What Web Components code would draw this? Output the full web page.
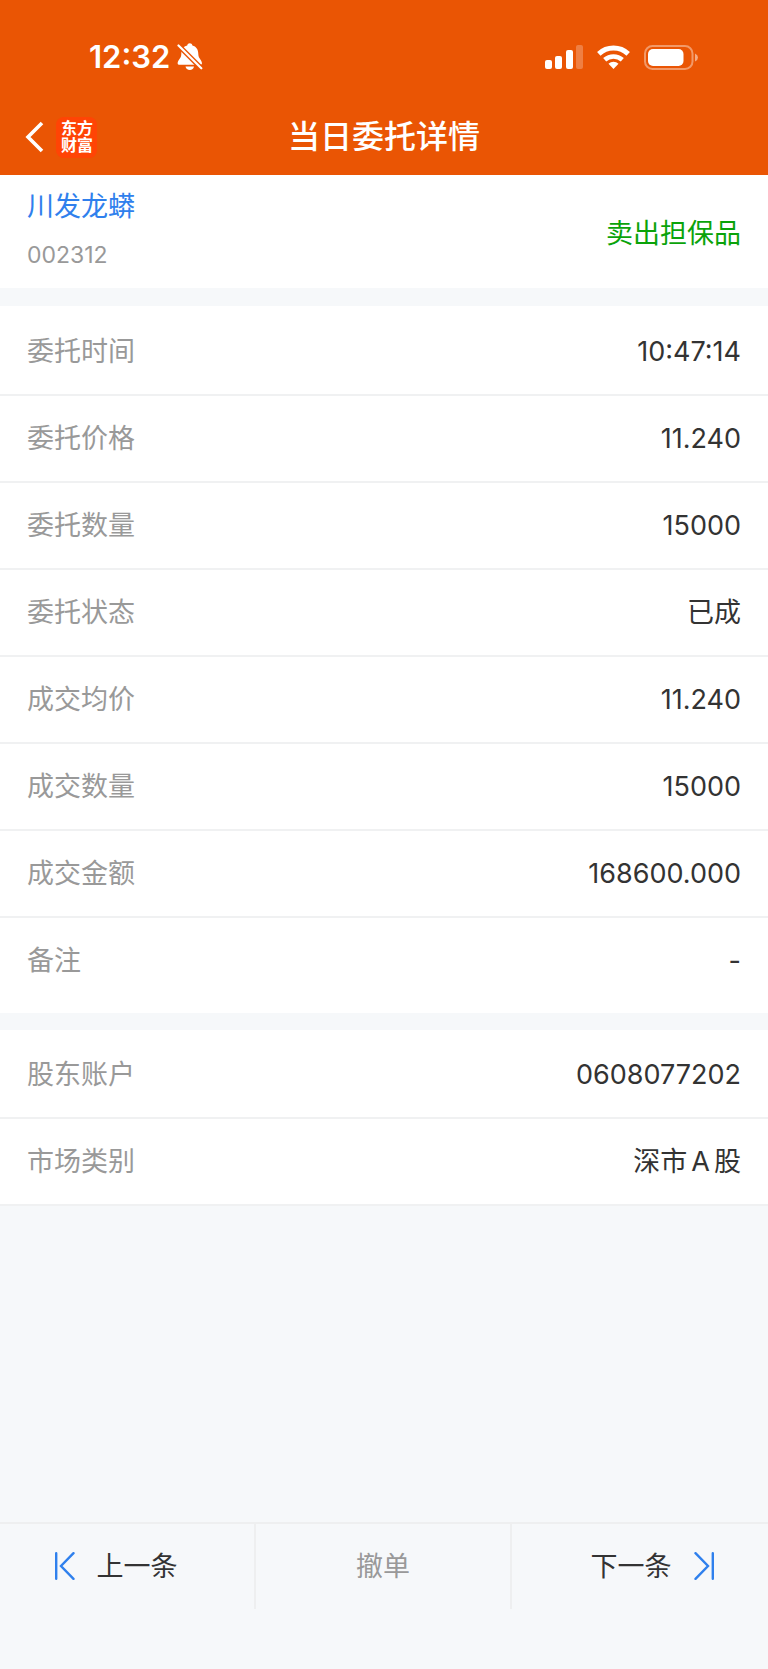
<!doctype html>

<html lang="zh-CN">
<head>
  <meta charset="utf-8">
  <meta name="viewport" content="width=device-width, initial-scale=1">
  <title>当日委托详情</title>
  <style>
    body {
      margin: 0;
      background: #f6f8fa;
      color: #333;
      font-family: Inter, "Noto Sans CJK SC", sans-serif;
      font-size: 27px;
      line-height: 40px;
    }

    .latin {
      padding: 0 4px;
    }
  </style>
</head>

<body>
<template id="status-bar-template">
<style>
  :host {
    display: flex;
    justify-content: space-between;
    align-items: center;
    height: 84px;
    padding: 15px 70px 0 89px;
    color: white;
  }

  .left, .right {
    display: flex;
    align-items: center;
  }

  .left {
    gap: 7px;
  }

  .right {
    gap: 14px;
  }

  .time {
    font-size: 31px;
    font-weight: 600;
  }

  svg {
    display: block;
  }
</style>
<div class="left">
  <span class="time"><slot></slot></span>
  <svg width="26" height="28" viewBox="0 0 26 28" fill="white">
    <path d="M10.200 2.500C10.500 1 11.500 .3 12.800 .3S15.100 1 15.400 2.500C19.200 3.500 21.300 6.500 21.300 11C21.300 15.500 24.800 17 25 20.300Q25 21.700 23.800 21.700H1.800Q.6 21.700 .6 20.300C.8 17 4.300 15.500 4.300 11C4.300 6.500 6.400 3.500 10.200 2.500Z"/>
    <path d="M8.500 23.500H17C16.700 25.500 15 27 12.800 27S8.800 25.500 8.500 23.500Z"/>
    <path d="M-1 0L26 27" fill="none" stroke="#ea5504" stroke-width="5"/>
    <path d="M1.500 2.500L24.300 25.300" fill="none" stroke="white" stroke-width="2.200" stroke-linecap="round"/>
  </svg>
</div>
<div class="right">
  <svg width="38" height="25" viewBox="0 0 38 25" fill="white">
    <rect x="0" y="15" width="7" height="9" rx="2"/>
    <rect x="10" y="11" width="7" height="13" rx="2"/>
    <rect x="21" y="5" width="7" height="19" rx="2"/>
    <rect x="31" y="0" width="7" height="24" rx="2" opacity=".25"/>
  </svg>
  <svg width="33" height="25" viewBox="0 0 33 25">
    <path d="M1.800 8.900A21.500 21.500 0 0 1 31.200 8.900" fill="none" stroke="white" stroke-width="5"/>
    <path d="M7.700 14.800A13.200 13.200 0 0 1 25.300 14.800" fill="none" stroke="white" stroke-width="4.600"/>
    <path d="M11.500 18.700A7.500 7.500 0 0 1 21.500 18.700L16.500 24Z" fill="white"/>
  </svg>
  <svg width="54" height="25" viewBox="0 0 54 25">
    <rect x="1" y="1" width="47.500" height="23" rx="7.500" fill="none" stroke="white" stroke-width="2" opacity=".4"/>
    <rect x="4" y="4" width="35.500" height="17" rx="5" fill="white"/>
    <path d="M51 8.500Q54 10 54 12.500T51 16.500Z" fill="white" opacity=".5"/>
  </svg>
</div>
</template>

<template id="nav-bar-template">
<style>
  :host {
    display: grid;
    grid-template-columns: 1fr auto 1fr;
    align-items: center;
    height: 76px;
    padding: 0 24px;
    color: white;
  }

  .back {
    display: flex;
    align-items: center;
    gap: 12px;
  }

  button {
    padding: 0;
    border: 0;
    background: none;
  }

  svg {
    display: block;
  }

  .logo {
    width: 32px;
    padding: 3px 4px 4px 5px;
    border-radius: 8px;
    background: #ff4405;
    font-size: 16px;
    font-weight: 700;
    line-height: 17px;
    text-align: center;
  }

  h1 {
    margin: 0;
    font-size: 32px;
    font-weight: 500;
    line-height: 44px;
  }
</style>
<div class="back">
  <button type="button" aria-label="返回">
    <svg width="20" height="32" viewBox="0 0 20 32" fill="none" stroke="white" stroke-width="3.600">
      <path d="M18 2L4 16L18 30"/>
    </svg>
  </button>
  <div class="logo"><slot name="logo"></slot></div>
</div>
<h1><slot></slot></h1>
</template>

<template id="stock-head-template">
<style>
  :host {
    display: flex;
    justify-content: space-between;
    align-items: center;
    height: 109px;
    padding: 4px 27px 0;
    background: white;
  }

  .name {
    color: #2f80ed;
  }

  .code {
    margin-top: 8px;
    color: #999;
    font-size: 23px;
  }

  .stock {
    padding-bottom: 6px;
  }

  .side {
    color: #0aa30a;
  }
</style>
<div class="stock">
  <div class="name"><slot name="name"></slot></div>
  <div class="code"><slot name="code"></slot></div>
</div>
<div class="side"><slot name="side"></slot></div>
</template>

<template id="detail-group-template">
<style>
  :host {
    display: block;
    margin-top: 17px;
    padding-top: 2px;
    background: white;
  }

  :host([spaced]) {
    margin-top: 18px;
    padding: 3px 0 8px;
  }
</style>
<slot></slot>
</template>

<template id="detail-row-template">
<style>
  :host {
    display: flex;
    justify-content: space-between;
    align-items: center;
    box-sizing: border-box;
    height: 87px;
    padding: 0 27px;
    border-bottom: 2px solid #f0f1f2;
  }

  :host([last]) {
    border-color: transparent;
  }

  .label {
    color: #999;
  }
</style>
<span class="label"></span>
<span class="value"><slot></slot></span>
</template>

<template id="order-actions-template">
<style>
  :host {
    display: grid;
    grid-template-columns: repeat(3, 1fr);
    margin-top: auto;
    padding-bottom: 60px;
    border-top: 2px solid #eeeff0;
  }

  button {
    display: flex;
    justify-content: center;
    align-items: center;
    gap: 22px;
    height: 85px;
    padding: 0;
    border: 0;
    border-right: 2px solid #eeeff0;
    background: none;
    color: #333;
    font: inherit;
  }

  button:first-of-type {
    padding-right: 22px;
  }

  button:last-of-type {
    padding-left: 24px;
    border-right: 0;
  }

  button:disabled {
    color: #999;
  }

  svg {
    margin-bottom: 2px;
    fill: none;
    stroke: #2f80ed;
    stroke-width: 2.400;
    stroke-linecap: round;
  }
</style>
<button type="button">
  <svg width="20" height="28" viewBox="0 0 20 28"><path d="M1.200 1.200V26.800M18.500 1.200L6 14L18.500 26.800"/></svg>
  <slot name="prev"></slot>
</button>
<button type="button" disabled><slot name="cancel"></slot></button>
<button type="button">
  <slot name="next"></slot>
  <svg width="20" height="28" viewBox="0 0 20 28"><path d="M18.800 1.200V26.800M1.500 1.200L14 14L1.500 26.800"/></svg>
</button>
</template>

<template id="order-page-template">
<style>
  :host {
    display: flex;
    flex-direction: column;
    min-height: 100vh;
  }

  header {
    background: #ea5504;
  }
</style>
<header><slot name="header"></slot></header>
<main><slot></slot></main>
<slot name="footer"></slot>
</template>

<order-page>
  <status-bar slot="header">12:32</status-bar>
  <nav-bar slot="header"><span slot="logo">东方财富</span>当日委托详情</nav-bar>

  <stock-head>
    <span slot="name">川发龙蟒</span>
    <span slot="code">002312</span>
    <span slot="side">卖出担保品</span>
  </stock-head>
  <detail-group spaced>
    <detail-row label="委托时间">10:47:14</detail-row>
    <detail-row label="委托价格">11.240</detail-row>
    <detail-row label="委托数量">15000</detail-row>
    <detail-row label="委托状态">已成</detail-row>
    <detail-row label="成交均价">11.240</detail-row>
    <detail-row label="成交数量">15000</detail-row>
    <detail-row label="成交金额">168600.000</detail-row>
    <detail-row label="备注" last>-</detail-row>
  </detail-group>
  <detail-group>
    <detail-row label="股东账户">0608077202</detail-row>
    <detail-row label="市场类别">深市<span class="latin">A</span>股</detail-row>
  </detail-group>

  <order-actions slot="footer">
    <span slot="prev">上一条</span>
    <span slot="cancel">撤单</span>
    <span slot="next">下一条</span>
  </order-actions>
</order-page>

<script>
class TemplateElement extends HTMLElement {
  constructor() {
    super();

    const template = document.getElementById(this.localName + '-template').content;

    this.sr = this.attachShadow({mode: 'open'});
    this.sr.appendChild(template.cloneNode(true));
  }
}

customElements.define('order-page', class extends TemplateElement {});
customElements.define('status-bar', class extends TemplateElement {});
customElements.define('nav-bar', class extends TemplateElement {});
customElements.define('stock-head', class extends TemplateElement {});
customElements.define('detail-group', class extends TemplateElement {});
customElements.define('order-actions', class extends TemplateElement {});

customElements.define('detail-row',
  class extends TemplateElement {
    connectedCallback() {
      this.sr.querySelector('.label').textContent = this.getAttribute('label');
    }
  }
);
</script>

</body>
</html>
